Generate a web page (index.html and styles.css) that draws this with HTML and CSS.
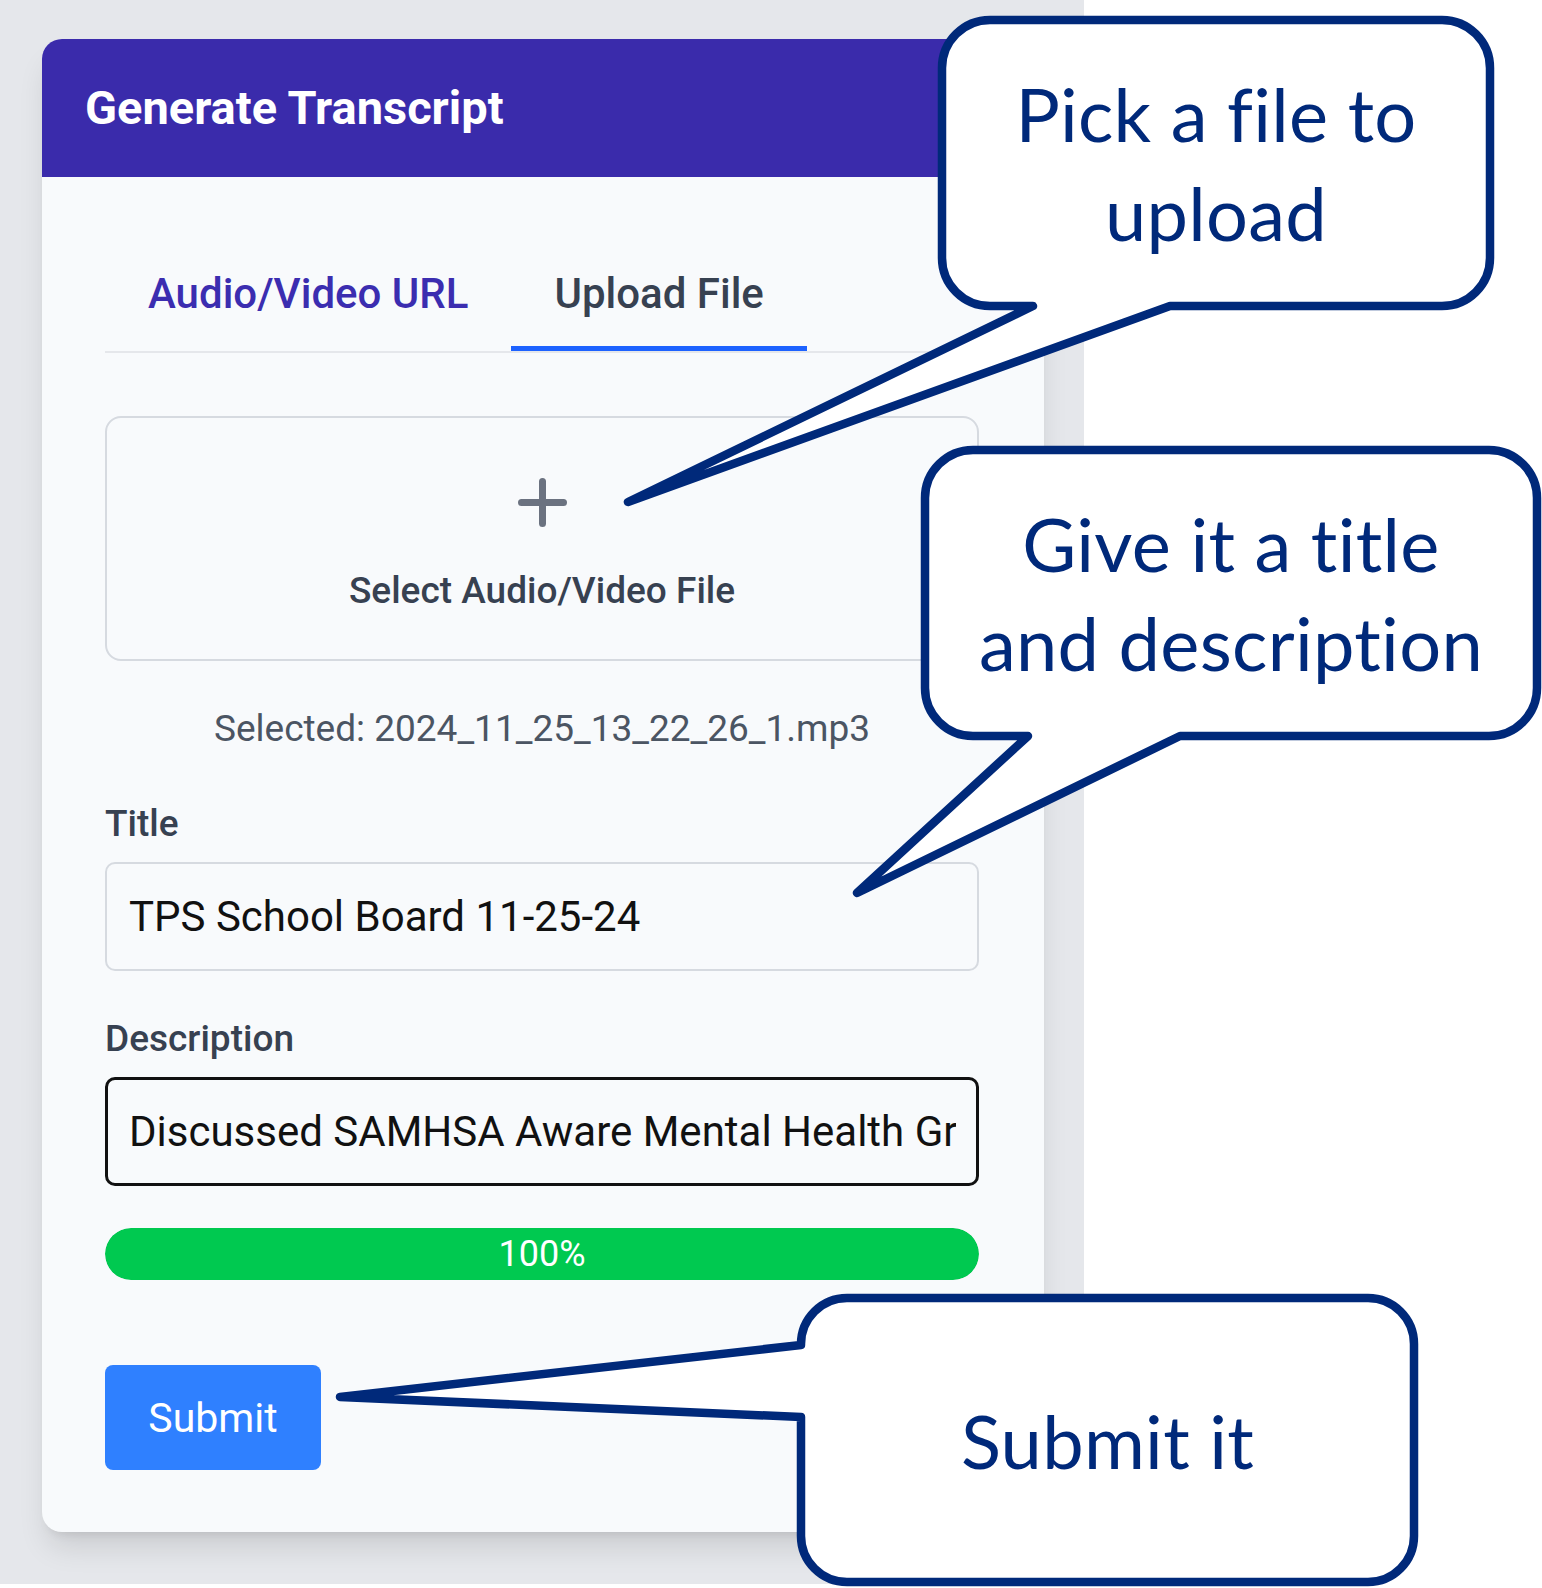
FILE: index.html
```html
<!DOCTYPE html>
<html lang="en">
<head>
<meta charset="utf-8">
<title>Generate Transcript</title>
<link rel="stylesheet" href="styles.css">
</head>
<body>
<div class="page">
  <div class="stage">
    <section class="card">
      <header class="card-header">
        <h1 class="card-title">Generate Transcript</h1>
      </header>
      <div class="card-body">
        <nav class="tabs">
          <button class="tab tab-inactive" type="button">Audio/Video URL</button>
          <button class="tab tab-active" type="button">Upload File</button>
        </nav>
        <div class="dropzone">
          <svg class="plus" width="49" height="49" viewBox="0 0 49 49" aria-hidden="true">
            <path d="M24.5 3.5V45.5M3.5 24.5H45.5" fill="none" stroke="#6b7280" stroke-width="7" stroke-linecap="round"/>
          </svg>
          <div class="dropzone-label">Select Audio/Video File</div>
        </div>
        <p class="selected">Selected: 2024_11_25_13_22_26_1.mp3</p>
        <label class="field-label label-title" for="title">Title</label>
        <input class="field" id="title" type="text" value="TPS School Board 11-25-24">
        <label class="field-label label-desc" for="desc">Description</label>
        <input class="field field-focus" id="desc" type="text" value="Discussed SAMHSA Aware Mental Health Grant">
        <div class="progress">
          <div class="progress-fill" style="width:100%">100%</div>
        </div>
        <button class="submit" type="button">Submit</button>
      </div>
    </section>
  </div>

  <svg class="callouts" width="1542" height="1588" viewBox="0 0 1542 1588" aria-hidden="true">
    <path class="bubble" d="M990 20H1442A48 48 0 0 1 1490 68V258A48 48 0 0 1 1442 306H1170L628 502L1033 306H990A48 48 0 0 1 942 258V68A48 48 0 0 1 990 20Z"/>
    <path class="bubble" d="M973 450H1489A48 48 0 0 1 1537 498V688A48 48 0 0 1 1489 736H1180L857 893L1028 736H973A48 48 0 0 1 925 688V498A48 48 0 0 1 973 450Z"/>
    <path class="bubble" d="M847 1298H1368A46 46 0 0 1 1414 1344V1536A46 46 0 0 1 1368 1582H847A46 46 0 0 1 801 1536V1417L340 1397L801 1345V1344A46 46 0 0 1 847 1298Z"/>
  </svg>

  <div class="callout-text callout-1">Pick a file to<br>upload</div>
  <div class="callout-text callout-2">Give it a title<br>and description</div>
  <div class="callout-text callout-3">Submit it</div>
</div>
</body>
</html>
```

FILE: styles.css
```css
* {
  box-sizing: border-box;
}

html, body {
  margin: 0;
  padding: 0;
  background: #ffffff;
}

body {
  font-family: Roboto, "Liberation Sans", sans-serif;
  color: #374151;
}

.page {
  position: relative;
  width: 1542px;
  height: 1588px;
  overflow: hidden;
}

.stage {
  width: 1084px;
  height: 1584px;
  background: #e5e7eb;
  padding: 39px 0 0 42px;
}

.card {
  width: 1002px;
  background: #f8fafc;
  border-radius: 20px;
  box-shadow: 0 20px 30px -6px rgba(0, 0, 0, 0.12), 0 8px 12px -8px rgba(0, 0, 0, 0.12);
  overflow: hidden;
}

.card-header {
  height: 138px;
  background: #3a2bab;
  display: flex;
  align-items: center;
  padding-left: 43px;
}

.card-title {
  margin: 0;
  font-size: 47px;
  font-weight: 700;
  color: #ffffff;
  line-height: 54px;
}

.card-body {
  padding: 65px 65px 62px 63px;
  display: flex;
  flex-direction: column;
  align-items: stretch;
}

.tabs {
  display: flex;
  border-bottom: 2px solid #e5e7eb;
}

.tab {
  font-family: Roboto, "Liberation Sans", sans-serif;
  font-size: 42px;
  font-weight: 500;
  line-height: 50px;
  padding: 27px 43px;
  margin: 0;
  background: none;
  border: 0;
  border-bottom: 5px solid transparent;
  cursor: pointer;
}

.tab-inactive {
  color: #3b2db0;
}

.tab-active {
  color: #374151;
  border-bottom-color: #1d62ff;
}

.dropzone {
  margin-top: 63px;
  height: 245px;
  border: 2px solid #d6dae0;
  border-radius: 16px;
  padding: 60px 0 46px;
  display: flex;
  flex-direction: column;
  align-items: center;
  gap: 42px;
}

.plus {
  display: block;
  flex: none;
}

.dropzone-label {
  font-size: 37px;
  font-weight: 500;
  line-height: 44px;
  color: #374151;
}

.selected {
  margin: 46px 0 0;
  font-size: 37px;
  line-height: 44px;
  text-align: center;
  color: #4b5563;
}

.field-label {
  display: block;
  font-size: 37px;
  font-weight: 500;
  line-height: 44px;
  color: #374151;
  margin-bottom: 16px;
}

.label-title {
  margin-top: 51px;
}

.label-desc {
  margin-top: 46px;
}

.field {
  display: block;
  width: 100%;
  height: 109px;
  margin: 0;
  font-family: Roboto, "Liberation Sans", sans-serif;
  font-size: 42px;
  color: #111111;
  background: transparent;
  border: 2px solid #d6dae0;
  border-radius: 10px;
  padding: 0 20px 0 22px;
  outline: none;
}

.field-focus {
  border: 3.5px solid #111111;
  padding-left: 21px;
}

.progress {
  margin-top: 42px;
  height: 52px;
  border-radius: 26px;
  background: #e5e7eb;
  overflow: hidden;
}

.progress-fill {
  height: 100%;
  background: #00c950;
  border-radius: 26px;
  color: #ffffff;
  font-size: 36px;
  line-height: 52px;
  text-align: center;
}

.submit {
  margin-top: 85px;
  align-self: flex-start;
  width: 216px;
  height: 105px;
  background: #2f80ff;
  color: #ffffff;
  border: 0;
  border-radius: 8px;
  font-family: Roboto, "Liberation Sans", sans-serif;
  font-size: 41px;
  font-weight: 400;
  cursor: pointer;
}

.callouts {
  position: absolute;
  top: 0;
  left: 0;
  pointer-events: none;
}

.bubble {
  fill: #ffffff;
  stroke: #00297a;
  stroke-width: 8.5;
  stroke-linejoin: round;
}

.callout-text {
  position: absolute;
  display: flex;
  align-items: center;
  justify-content: center;
  text-align: center;
  font-family: Lato, "Noto Sans", sans-serif;
  font-size: 74px;
  line-height: 99px;
  color: #00297a;
  letter-spacing: 0.3px;
}

.callout-1 {
  left: 942px;
  top: 20px;
  width: 548px;
  height: 286px;
}

.callout-2 {
  left: 925px;
  top: 450px;
  width: 612px;
  height: 286px;
}

.callout-3 {
  left: 801px;
  top: 1298px;
  width: 613px;
  height: 284px;
}
```
